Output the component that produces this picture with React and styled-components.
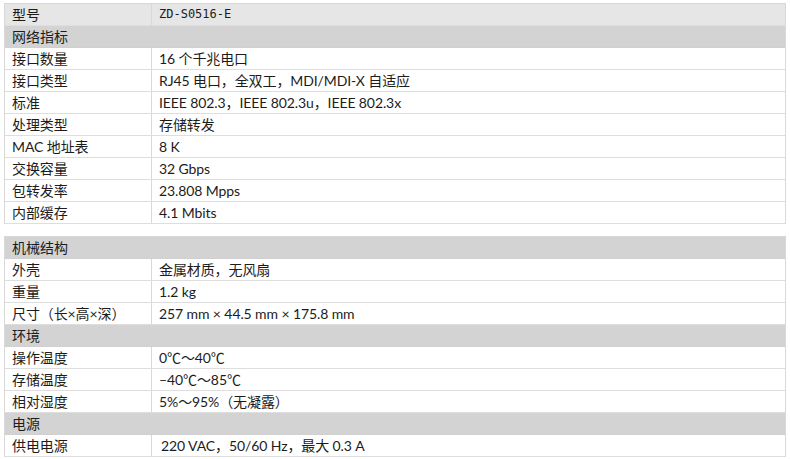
import React from 'react';
import styled, { createGlobalStyle } from 'styled-components';

const GlobalStyle = createGlobalStyle`
  html, body {
    margin: 0;
    padding: 0;
    background: #fff;
  }
  body {
    font-family: Lato, 'Noto Sans CJK SC', sans-serif;
    color: #1c1c1c;
  }
`;

const groups = [
  {
    rows: [
      { type: 'head', label: '型号', value: 'ZD-S0516-E' },
      { type: 'section', label: '网络指标' },
      { label: '接口数量', value: '16 个千兆电口' },
      { label: '接口类型', value: 'RJ45 电口，全双工，MDI/MDI-X 自适应' },
      { label: '标准', value: 'IEEE 802.3，IEEE 802.3u，IEEE 802.3x' },
      { label: '处理类型', value: '存储转发' },
      { label: 'MAC 地址表', value: '8 K' },
      { label: '交换容量', value: '32 Gbps' },
      { label: '包转发率', value: '23.808 Mpps' },
      { label: '内部缓存', value: '4.1 Mbits' },
    ],
  },
  {
    rows: [
      { type: 'section', label: '机械结构' },
      { label: '外壳', value: '金属材质，无风扇' },
      { label: '重量', value: '1.2 kg' },
      { label: '尺寸（长×高×深）', value: '257 mm × 44.5 mm × 175.8 mm' },
      { type: 'section', label: '环境' },
      { label: '操作温度', value: '0℃～40℃' },
      { label: '存储温度', value: '–40℃～85℃' },
      { label: '相对湿度', value: '5%～95%（无凝露）' },
      { type: 'section', label: '电源' },
      { label: '供电电源', value: '220 VAC，50/60 Hz，最大 0.3 A', indent: true },
    ],
  },
];

const App = () => {
  return (
    <>
      <GlobalStyle />
      <Page>
        {groups.map((group, gi) => (
          <SpecTable key={gi}>
            {group.rows.map((row, i) =>
              row.type === 'section' ? (
                <SectionRow key={i}>{row.label}</SectionRow>
              ) : (
                <Row key={i} head={row.type === 'head'}>
                  <Label>{row.label}</Label>
                  <Value mono={row.type === 'head'} indent={row.indent}>
                    {row.value}
                  </Value>
                </Row>
              )
            )}
          </SpecTable>
        ))}
      </Page>
    </>
  );
};

const Page = styled.div`
  display: flex;
  flex-direction: column;
  gap: 12px;
  padding: 3px 4px 0 4px;
  width: 782px;
`;

const SpecTable = styled.div`
  border: 1px solid #d8d8d8;
  border-bottom: none;
`;

const Row = styled.div`
  display: grid;
  grid-template-columns: 147px 1fr;
  height: 21px;
  border-bottom: 1px solid #dedede;
  background: ${({ head }) => (head ? '#e6e6e6' : '#fff')};
  font-size: 14px;
  line-height: 21px;
  letter-spacing: -0.1px;
`;

const Label = styled.div`
  padding-left: 7px;
  border-right: 1px solid #d8d8d8;
  white-space: nowrap;
`;

const Value = styled.div`
  padding-left: ${({ indent }) => (indent ? '9px' : '7px')};
  white-space: nowrap;
  ${({ mono }) =>
    mono &&
    `
      font-family: 'DejaVu Sans Mono', monospace;
      font-size: 12px;
      letter-spacing: 0;
  `}
`;

const SectionRow = styled.div`
  height: 21px;
  line-height: 21px;
  padding-left: 7px;
  background: #d3d3d3;
  border-bottom: 1px solid #d0d0d0;
  font-size: 14px;
`;

export default App;
